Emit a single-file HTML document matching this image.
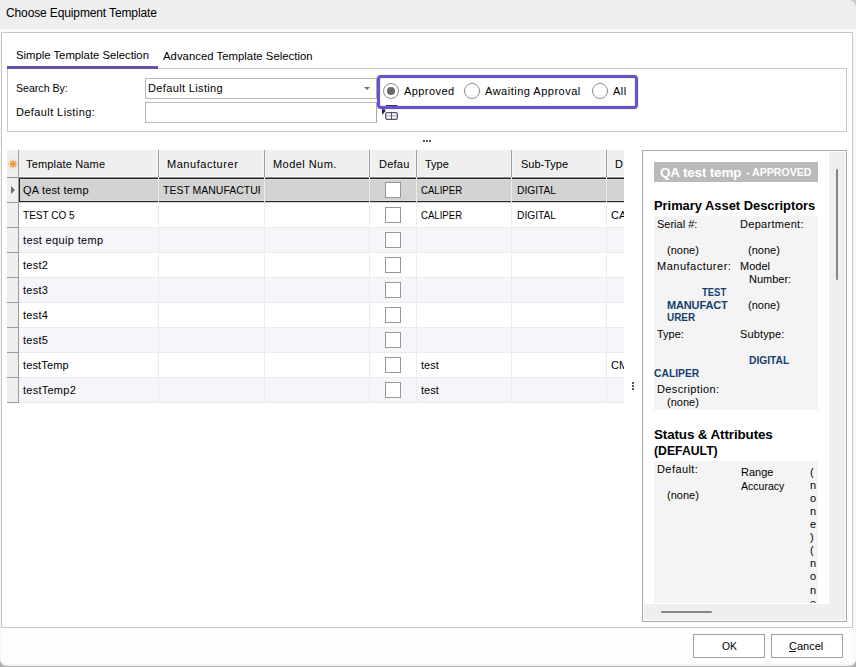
<!DOCTYPE html><html><head><meta charset="utf-8"><style>
*{margin:0;padding:0;box-sizing:border-box}
html,body{width:856px;height:667px;overflow:hidden;background:#fdfdfd;font-family:"Liberation Sans",sans-serif;color:#000}
.t{position:absolute;white-space:nowrap;line-height:1}
.r{position:absolute}
</style></head><body>
<div class="r" style="left:846px;top:0px;width:10px;height:10px;background:#c9cacc"></div>
<div class="r" style="left:0px;top:0px;width:856px;height:29px;background:#efefef;border-top-right-radius:8px"></div>
<div class="r" style="left:0px;top:29px;width:856px;height:3px;background:#f9fafb"></div>
<div class="t" style="left:6px;top:6.84px;font-size:12px;letter-spacing:-0.125px;">Choose Equipment Template</div><div class="r" style="left:0px;top:655px;width:856px;height:12px;background:#b0b0b0"></div>
<div class="r" style="left:0px;top:620px;width:856px;height:46px;background:#fdfdfd;border-bottom:2px solid #f3f4f6;border-radius:0 0 7px 7px"></div>
<div class="r" style="left:0px;top:29px;width:1px;height:630px;background:#f5f7fa"></div>
<div class="r" style="left:853px;top:29px;width:3px;height:630px;background:#f8f9fb"></div>
<div class="r" style="left:1px;top:32px;width:852px;height:596px;background:#fff;border:1px solid #c6c6c6"></div>
<div class="t" style="left:16px;top:50.43px;font-size:11.3px;">Simple Template Selection</div><div class="t" style="left:163px;top:51.43px;font-size:11.3px;letter-spacing:0.038px;">Advanced Template Selection</div><div class="r" style="left:7px;top:68px;width:840px;height:64px;border:1px solid #c8c8c8"></div>
<div class="r" style="left:7px;top:66px;width:151px;height:3px;background:#6650a8"></div>
<div class="t" style="left:16.0px;top:82.69px;font-size:11px;transform:scaleX(0.9623);transform-origin:0 0;">Search By:</div><div class="t" style="left:16px;top:106.69px;font-size:11px;letter-spacing:0.4px;">Default Listing:</div><div class="r" style="left:145px;top:78px;width:232px;height:21px;background:#fff;border:1px solid #bababa"></div>
<div class="t" style="left:148px;top:82.69px;font-size:11px;letter-spacing:0.357px;">Default Listing</div><svg class="r" style="left:364px;top:87px" width="7" height="4"><path d="M0 0h6L3 3z" fill="#6d6d6d"/></svg>
<div class="r" style="left:145px;top:102px;width:232px;height:21px;background:#fff;border:1px solid #bababa"></div>
<div class="r" style="left:377px;top:75px;width:261px;height:34px;background:#fff;border:3px solid #6652cc;border-radius:4px;box-shadow:0 0 1px 1px #eeeee6, inset 0 0 1px 1px #efefe8"></div>
<div class="r" style="left:376px;top:78px;width:1px;height:21px;background:#a8a8a8"></div>
<div class="r" style="left:376px;top:102px;width:1px;height:21px;background:#a8a8a8"></div>
<svg class="r" style="left:380px;top:103px" width="20" height="18" viewBox="380 103 20 18"><path d="M386.5 105.5h10.5" stroke="#3a3458" stroke-width="1.2" stroke-linecap="round"/><path d="M382 109 L385.4 109.6 L385.2 111.2 L382.9 114.2 L382 114.2 Z" fill="#2e2848"/><rect x="385.7" y="112.7" width="11.6" height="6.6" rx="1.6" fill="#fff" stroke="#554f72" stroke-width="1.3"/><path d="M386.3 115.8h10.4" stroke="#9a96ac" stroke-width="1"/><path d="M391.5 112.5v7" stroke="#554f72" stroke-width="1.1"/></svg>
<svg class="r" style="left:383px;top:83px" width="16" height="16"><circle cx="8" cy="8" r="7.5" fill="#fff" stroke="#8e8e8e" stroke-width="1"/><circle cx="8" cy="8" r="4" fill="#6a6a6a"/></svg>
<div class="t" style="left:404px;top:85.69px;font-size:11px;letter-spacing:0.429px;">Approved</div><svg class="r" style="left:464px;top:83px" width="16" height="16"><circle cx="8" cy="8" r="7.5" fill="#fff" stroke="#8e8e8e" stroke-width="1"/></svg>
<div class="t" style="left:485px;top:85.69px;font-size:11px;letter-spacing:0.5px;">Awaiting Approval</div><svg class="r" style="left:592px;top:83px" width="16" height="16"><circle cx="8" cy="8" r="7.5" fill="#fff" stroke="#8e8e8e" stroke-width="1"/></svg>
<div class="t" style="left:613px;top:85.69px;font-size:11px;letter-spacing:0.5px;">All</div><div class="r" style="left:423px;top:140px;width:2px;height:2px;background:#5a5a5a"></div>
<div class="r" style="left:426px;top:140px;width:2px;height:2px;background:#5a5a5a"></div>
<div class="r" style="left:429px;top:140px;width:2px;height:2px;background:#5a5a5a"></div>
<div class="r" style="left:632px;top:382px;width:2px;height:2px;background:#5a5a5a"></div>
<div class="r" style="left:632px;top:385px;width:2px;height:2px;background:#5a5a5a"></div>
<div class="r" style="left:632px;top:388px;width:2px;height:2px;background:#5a5a5a"></div>
<div class="r" style="left:7px;top:150px;width:617px;height:28px;background:#efefef"></div>
<div class="r" style="left:158px;top:150px;width:1px;height:27px;background:#9d9d9d"></div>
<div class="r" style="left:157px;top:151px;width:1px;height:26px;background:#f6f6f6"></div>
<div class="r" style="left:159px;top:151px;width:1px;height:26px;background:#f6f6f6"></div>
<div class="r" style="left:264px;top:150px;width:1px;height:27px;background:#9d9d9d"></div>
<div class="r" style="left:263px;top:151px;width:1px;height:26px;background:#f6f6f6"></div>
<div class="r" style="left:265px;top:151px;width:1px;height:26px;background:#f6f6f6"></div>
<div class="r" style="left:369px;top:150px;width:1px;height:27px;background:#9d9d9d"></div>
<div class="r" style="left:368px;top:151px;width:1px;height:26px;background:#f6f6f6"></div>
<div class="r" style="left:370px;top:151px;width:1px;height:26px;background:#f6f6f6"></div>
<div class="r" style="left:416px;top:150px;width:1px;height:27px;background:#9d9d9d"></div>
<div class="r" style="left:415px;top:151px;width:1px;height:26px;background:#f6f6f6"></div>
<div class="r" style="left:417px;top:151px;width:1px;height:26px;background:#f6f6f6"></div>
<div class="r" style="left:511px;top:150px;width:1px;height:27px;background:#9d9d9d"></div>
<div class="r" style="left:510px;top:151px;width:1px;height:26px;background:#f6f6f6"></div>
<div class="r" style="left:512px;top:151px;width:1px;height:26px;background:#f6f6f6"></div>
<div class="r" style="left:606px;top:150px;width:1px;height:27px;background:#9d9d9d"></div>
<div class="r" style="left:605px;top:151px;width:1px;height:26px;background:#f6f6f6"></div>
<div class="r" style="left:607px;top:151px;width:1px;height:26px;background:#f6f6f6"></div>
<div class="r" style="left:18px;top:150px;width:1px;height:28px;background:#9d9d9d"></div>
<div class="r" style="left:19px;top:177px;width:139px;height:1px;background:#8a8a8a"></div>
<div class="r" style="left:19px;top:176px;width:139px;height:1px;background:#f8f8f8"></div>
<div class="r" style="left:159px;top:177px;width:105px;height:1px;background:#8a8a8a"></div>
<div class="r" style="left:159px;top:176px;width:105px;height:1px;background:#f8f8f8"></div>
<div class="r" style="left:265px;top:177px;width:104px;height:1px;background:#8a8a8a"></div>
<div class="r" style="left:265px;top:176px;width:104px;height:1px;background:#f8f8f8"></div>
<div class="r" style="left:370px;top:177px;width:46px;height:1px;background:#8a8a8a"></div>
<div class="r" style="left:370px;top:176px;width:46px;height:1px;background:#f8f8f8"></div>
<div class="r" style="left:417px;top:177px;width:94px;height:1px;background:#8a8a8a"></div>
<div class="r" style="left:417px;top:176px;width:94px;height:1px;background:#f8f8f8"></div>
<div class="r" style="left:512px;top:177px;width:94px;height:1px;background:#8a8a8a"></div>
<div class="r" style="left:512px;top:176px;width:94px;height:1px;background:#f8f8f8"></div>
<div class="r" style="left:607px;top:177px;width:17px;height:1px;background:#8a8a8a"></div>
<div class="r" style="left:607px;top:176px;width:17px;height:1px;background:#f8f8f8"></div>
<div class="r" style="left:7px;top:177px;width:11px;height:1px;background:#8a8a8a"></div>
<svg class="r" style="left:8px;top:159px" width="10" height="10"><g stroke="#f39a3a" stroke-width="1.2"><path d="M5 0.5v9M0.5 5h9M1.8 1.8l6.4 6.4M8.2 1.8l-6.4 6.4"/></g><circle cx="5" cy="5" r="2.6" fill="#f39a3a"/></svg>
<div class="t" style="left:26px;top:158.69px;font-size:11px;letter-spacing:0.167px;">Template Name</div><div class="t" style="left:167px;top:158.69px;font-size:11px;letter-spacing:0.545px;">Manufacturer</div><div class="t" style="left:273px;top:158.69px;font-size:11px;letter-spacing:0.444px;">Model Num.</div><div class="t" style="left:379px;top:158.69px;font-size:11px;letter-spacing:0.25px;">Defau</div><div class="t" style="left:425px;top:158.69px;font-size:11px;">Type</div><div class="t" style="left:521px;top:158.69px;font-size:11px;">Sub-Type</div><div class="t" style="left:615px;top:158.69px;font-size:11px;">D</div><div class="r" style="left:19px;top:178px;width:605px;height:25px;background:#d3d3d3"></div>
<div class="r" style="left:158px;top:178px;width:1px;height:25px;background:#e0e0e0"></div>
<div class="r" style="left:264px;top:178px;width:1px;height:25px;background:#e0e0e0"></div>
<div class="r" style="left:369px;top:178px;width:1px;height:25px;background:#e0e0e0"></div>
<div class="r" style="left:416px;top:178px;width:1px;height:25px;background:#e0e0e0"></div>
<div class="r" style="left:511px;top:178px;width:1px;height:25px;background:#e0e0e0"></div>
<div class="r" style="left:606px;top:178px;width:1px;height:25px;background:#e0e0e0"></div>
<div class="r" style="left:7px;top:178px;width:11px;height:24px;background:#efefef"></div>
<div class="r" style="left:7px;top:202px;width:12px;height:1px;background:#9a9a9a"></div>
<div class="r" style="left:18px;top:178px;width:1px;height:25px;background:#9a9a9a"></div>
<div class="t" style="left:23px;top:184.69px;font-size:11px;letter-spacing:0.182px;">QA test temp</div><div class="r" style="left:159px;top:178px;width:101px;height:24px;overflow:hidden"><div class="t" style="left:4.0px;top:6.69px;font-size:11px;transform:scaleX(0.9533);transform-origin:0 0;">TEST MANUFACTUR</div></div>
<div class="r" style="left:385px;top:182px;width:16px;height:16px;background:#fff;border:1px solid #979797"></div>
<div class="t" style="left:421.0px;top:184.69px;font-size:11px;transform:scaleX(0.8723);transform-origin:0 0;">CALIPER</div><div class="t" style="left:517.0px;top:184.69px;font-size:11px;transform:scaleX(0.9286);transform-origin:0 0;">DIGITAL</div><div class="r" style="left:19px;top:203px;width:605px;height:25px;background:#ffffff"></div>
<div class="r" style="left:19px;top:227px;width:605px;height:1px;background:#ececec"></div>
<div class="r" style="left:158px;top:203px;width:1px;height:25px;background:#ececec"></div>
<div class="r" style="left:264px;top:203px;width:1px;height:25px;background:#ececec"></div>
<div class="r" style="left:369px;top:203px;width:1px;height:25px;background:#ececec"></div>
<div class="r" style="left:416px;top:203px;width:1px;height:25px;background:#ececec"></div>
<div class="r" style="left:511px;top:203px;width:1px;height:25px;background:#ececec"></div>
<div class="r" style="left:606px;top:203px;width:1px;height:25px;background:#ececec"></div>
<div class="r" style="left:7px;top:203px;width:11px;height:24px;background:#efefef"></div>
<div class="r" style="left:7px;top:227px;width:12px;height:1px;background:#9a9a9a"></div>
<div class="r" style="left:18px;top:203px;width:1px;height:25px;background:#9a9a9a"></div>
<div class="t" style="left:23.0px;top:209.69px;font-size:11px;transform:scaleX(0.9123);transform-origin:0 0;">TEST CO 5</div><div class="r" style="left:385px;top:207px;width:16px;height:16px;background:#fff;border:1px solid #979797"></div>
<div class="t" style="left:421.0px;top:209.69px;font-size:11px;transform:scaleX(0.8723);transform-origin:0 0;">CALIPER</div><div class="t" style="left:517.0px;top:209.69px;font-size:11px;transform:scaleX(0.9286);transform-origin:0 0;">DIGITAL</div><div class="r" style="left:607px;top:203px;width:17px;height:24px;overflow:hidden"><div class="t" style="left:4px;top:6.69px;font-size:11px;">CA</div></div>
<div class="r" style="left:19px;top:228px;width:605px;height:25px;background:#f5f5fa"></div>
<div class="r" style="left:19px;top:252px;width:605px;height:1px;background:#ececec"></div>
<div class="r" style="left:158px;top:228px;width:1px;height:25px;background:#ececec"></div>
<div class="r" style="left:264px;top:228px;width:1px;height:25px;background:#ececec"></div>
<div class="r" style="left:369px;top:228px;width:1px;height:25px;background:#ececec"></div>
<div class="r" style="left:416px;top:228px;width:1px;height:25px;background:#ececec"></div>
<div class="r" style="left:511px;top:228px;width:1px;height:25px;background:#ececec"></div>
<div class="r" style="left:606px;top:228px;width:1px;height:25px;background:#ececec"></div>
<div class="r" style="left:7px;top:228px;width:11px;height:24px;background:#efefef"></div>
<div class="r" style="left:7px;top:252px;width:12px;height:1px;background:#9a9a9a"></div>
<div class="r" style="left:18px;top:228px;width:1px;height:25px;background:#9a9a9a"></div>
<div class="t" style="left:23px;top:234.69px;font-size:11px;letter-spacing:0.357px;">test equip temp</div><div class="r" style="left:385px;top:232px;width:16px;height:16px;background:#fff;border:1px solid #979797"></div>
<div class="r" style="left:19px;top:253px;width:605px;height:25px;background:#ffffff"></div>
<div class="r" style="left:19px;top:277px;width:605px;height:1px;background:#ececec"></div>
<div class="r" style="left:158px;top:253px;width:1px;height:25px;background:#ececec"></div>
<div class="r" style="left:264px;top:253px;width:1px;height:25px;background:#ececec"></div>
<div class="r" style="left:369px;top:253px;width:1px;height:25px;background:#ececec"></div>
<div class="r" style="left:416px;top:253px;width:1px;height:25px;background:#ececec"></div>
<div class="r" style="left:511px;top:253px;width:1px;height:25px;background:#ececec"></div>
<div class="r" style="left:606px;top:253px;width:1px;height:25px;background:#ececec"></div>
<div class="r" style="left:7px;top:253px;width:11px;height:24px;background:#efefef"></div>
<div class="r" style="left:7px;top:277px;width:12px;height:1px;background:#9a9a9a"></div>
<div class="r" style="left:18px;top:253px;width:1px;height:25px;background:#9a9a9a"></div>
<div class="t" style="left:23px;top:259.69px;font-size:11px;letter-spacing:0.25px;">test2</div><div class="r" style="left:385px;top:257px;width:16px;height:16px;background:#fff;border:1px solid #979797"></div>
<div class="r" style="left:19px;top:278px;width:605px;height:25px;background:#f5f5fa"></div>
<div class="r" style="left:19px;top:302px;width:605px;height:1px;background:#ececec"></div>
<div class="r" style="left:158px;top:278px;width:1px;height:25px;background:#ececec"></div>
<div class="r" style="left:264px;top:278px;width:1px;height:25px;background:#ececec"></div>
<div class="r" style="left:369px;top:278px;width:1px;height:25px;background:#ececec"></div>
<div class="r" style="left:416px;top:278px;width:1px;height:25px;background:#ececec"></div>
<div class="r" style="left:511px;top:278px;width:1px;height:25px;background:#ececec"></div>
<div class="r" style="left:606px;top:278px;width:1px;height:25px;background:#ececec"></div>
<div class="r" style="left:7px;top:278px;width:11px;height:24px;background:#efefef"></div>
<div class="r" style="left:7px;top:302px;width:12px;height:1px;background:#9a9a9a"></div>
<div class="r" style="left:18px;top:278px;width:1px;height:25px;background:#9a9a9a"></div>
<div class="t" style="left:23px;top:284.69px;font-size:11px;letter-spacing:0.25px;">test3</div><div class="r" style="left:385px;top:282px;width:16px;height:16px;background:#fff;border:1px solid #979797"></div>
<div class="r" style="left:19px;top:303px;width:605px;height:25px;background:#ffffff"></div>
<div class="r" style="left:19px;top:327px;width:605px;height:1px;background:#ececec"></div>
<div class="r" style="left:158px;top:303px;width:1px;height:25px;background:#ececec"></div>
<div class="r" style="left:264px;top:303px;width:1px;height:25px;background:#ececec"></div>
<div class="r" style="left:369px;top:303px;width:1px;height:25px;background:#ececec"></div>
<div class="r" style="left:416px;top:303px;width:1px;height:25px;background:#ececec"></div>
<div class="r" style="left:511px;top:303px;width:1px;height:25px;background:#ececec"></div>
<div class="r" style="left:606px;top:303px;width:1px;height:25px;background:#ececec"></div>
<div class="r" style="left:7px;top:303px;width:11px;height:24px;background:#efefef"></div>
<div class="r" style="left:7px;top:327px;width:12px;height:1px;background:#9a9a9a"></div>
<div class="r" style="left:18px;top:303px;width:1px;height:25px;background:#9a9a9a"></div>
<div class="t" style="left:23px;top:309.69px;font-size:11px;letter-spacing:0.25px;">test4</div><div class="r" style="left:385px;top:307px;width:16px;height:16px;background:#fff;border:1px solid #979797"></div>
<div class="r" style="left:19px;top:328px;width:605px;height:25px;background:#f5f5fa"></div>
<div class="r" style="left:19px;top:352px;width:605px;height:1px;background:#ececec"></div>
<div class="r" style="left:158px;top:328px;width:1px;height:25px;background:#ececec"></div>
<div class="r" style="left:264px;top:328px;width:1px;height:25px;background:#ececec"></div>
<div class="r" style="left:369px;top:328px;width:1px;height:25px;background:#ececec"></div>
<div class="r" style="left:416px;top:328px;width:1px;height:25px;background:#ececec"></div>
<div class="r" style="left:511px;top:328px;width:1px;height:25px;background:#ececec"></div>
<div class="r" style="left:606px;top:328px;width:1px;height:25px;background:#ececec"></div>
<div class="r" style="left:7px;top:328px;width:11px;height:24px;background:#efefef"></div>
<div class="r" style="left:7px;top:352px;width:12px;height:1px;background:#9a9a9a"></div>
<div class="r" style="left:18px;top:328px;width:1px;height:25px;background:#9a9a9a"></div>
<div class="t" style="left:23px;top:334.69px;font-size:11px;letter-spacing:0.25px;">test5</div><div class="r" style="left:385px;top:332px;width:16px;height:16px;background:#fff;border:1px solid #979797"></div>
<div class="r" style="left:19px;top:353px;width:605px;height:25px;background:#ffffff"></div>
<div class="r" style="left:19px;top:377px;width:605px;height:1px;background:#ececec"></div>
<div class="r" style="left:158px;top:353px;width:1px;height:25px;background:#ececec"></div>
<div class="r" style="left:264px;top:353px;width:1px;height:25px;background:#ececec"></div>
<div class="r" style="left:369px;top:353px;width:1px;height:25px;background:#ececec"></div>
<div class="r" style="left:416px;top:353px;width:1px;height:25px;background:#ececec"></div>
<div class="r" style="left:511px;top:353px;width:1px;height:25px;background:#ececec"></div>
<div class="r" style="left:606px;top:353px;width:1px;height:25px;background:#ececec"></div>
<div class="r" style="left:7px;top:353px;width:11px;height:24px;background:#efefef"></div>
<div class="r" style="left:7px;top:377px;width:12px;height:1px;background:#9a9a9a"></div>
<div class="r" style="left:18px;top:353px;width:1px;height:25px;background:#9a9a9a"></div>
<div class="t" style="left:23px;top:359.69px;font-size:11px;letter-spacing:0.143px;">testTemp</div><div class="r" style="left:385px;top:357px;width:16px;height:16px;background:#fff;border:1px solid #979797"></div>
<div class="t" style="left:421px;top:359.69px;font-size:11px;">test</div><div class="r" style="left:607px;top:353px;width:17px;height:24px;overflow:hidden"><div class="t" style="left:4px;top:6.69px;font-size:11px;">CM</div></div>
<div class="r" style="left:19px;top:378px;width:605px;height:25px;background:#f5f5fa"></div>
<div class="r" style="left:19px;top:402px;width:605px;height:1px;background:#ececec"></div>
<div class="r" style="left:158px;top:378px;width:1px;height:25px;background:#ececec"></div>
<div class="r" style="left:264px;top:378px;width:1px;height:25px;background:#ececec"></div>
<div class="r" style="left:369px;top:378px;width:1px;height:25px;background:#ececec"></div>
<div class="r" style="left:416px;top:378px;width:1px;height:25px;background:#ececec"></div>
<div class="r" style="left:511px;top:378px;width:1px;height:25px;background:#ececec"></div>
<div class="r" style="left:606px;top:378px;width:1px;height:25px;background:#ececec"></div>
<div class="r" style="left:7px;top:378px;width:11px;height:24px;background:#efefef"></div>
<div class="r" style="left:7px;top:402px;width:12px;height:1px;background:#9a9a9a"></div>
<div class="r" style="left:18px;top:378px;width:1px;height:25px;background:#9a9a9a"></div>
<div class="t" style="left:23px;top:384.69px;font-size:11px;letter-spacing:0.25px;">testTemp2</div><div class="r" style="left:385px;top:382px;width:16px;height:16px;background:#fff;border:1px solid #979797"></div>
<div class="t" style="left:421px;top:384.69px;font-size:11px;">test</div><div class="r" style="left:19px;top:178px;width:139px;height:1px;background:#262626"></div>
<div class="r" style="left:19px;top:179px;width:139px;height:1px;background:#dcdcdc"></div>
<div class="r" style="left:19px;top:200px;width:139px;height:1px;background:#dcdcdc"></div>
<div class="r" style="left:19px;top:201px;width:139px;height:1px;background:#262626"></div>
<div class="r" style="left:159px;top:178px;width:105px;height:1px;background:#262626"></div>
<div class="r" style="left:159px;top:179px;width:105px;height:1px;background:#dcdcdc"></div>
<div class="r" style="left:159px;top:200px;width:105px;height:1px;background:#dcdcdc"></div>
<div class="r" style="left:159px;top:201px;width:105px;height:1px;background:#262626"></div>
<div class="r" style="left:265px;top:178px;width:104px;height:1px;background:#262626"></div>
<div class="r" style="left:265px;top:179px;width:104px;height:1px;background:#dcdcdc"></div>
<div class="r" style="left:265px;top:200px;width:104px;height:1px;background:#dcdcdc"></div>
<div class="r" style="left:265px;top:201px;width:104px;height:1px;background:#262626"></div>
<div class="r" style="left:370px;top:178px;width:46px;height:1px;background:#262626"></div>
<div class="r" style="left:370px;top:179px;width:46px;height:1px;background:#dcdcdc"></div>
<div class="r" style="left:370px;top:200px;width:46px;height:1px;background:#dcdcdc"></div>
<div class="r" style="left:370px;top:201px;width:46px;height:1px;background:#262626"></div>
<div class="r" style="left:417px;top:178px;width:94px;height:1px;background:#262626"></div>
<div class="r" style="left:417px;top:179px;width:94px;height:1px;background:#dcdcdc"></div>
<div class="r" style="left:417px;top:200px;width:94px;height:1px;background:#dcdcdc"></div>
<div class="r" style="left:417px;top:201px;width:94px;height:1px;background:#262626"></div>
<div class="r" style="left:512px;top:178px;width:94px;height:1px;background:#262626"></div>
<div class="r" style="left:512px;top:179px;width:94px;height:1px;background:#dcdcdc"></div>
<div class="r" style="left:512px;top:200px;width:94px;height:1px;background:#dcdcdc"></div>
<div class="r" style="left:512px;top:201px;width:94px;height:1px;background:#262626"></div>
<div class="r" style="left:607px;top:178px;width:17px;height:1px;background:#262626"></div>
<div class="r" style="left:607px;top:179px;width:17px;height:1px;background:#dcdcdc"></div>
<div class="r" style="left:607px;top:200px;width:17px;height:1px;background:#dcdcdc"></div>
<div class="r" style="left:607px;top:201px;width:17px;height:1px;background:#262626"></div>
<div class="r" style="left:158px;top:177px;width:1px;height:25px;background:#ececec"></div>
<div class="r" style="left:264px;top:177px;width:1px;height:25px;background:#ececec"></div>
<div class="r" style="left:369px;top:177px;width:1px;height:25px;background:#ececec"></div>
<div class="r" style="left:416px;top:177px;width:1px;height:25px;background:#ececec"></div>
<div class="r" style="left:511px;top:177px;width:1px;height:25px;background:#ececec"></div>
<div class="r" style="left:606px;top:177px;width:1px;height:25px;background:#ececec"></div>
<div class="r" style="left:19px;top:178px;width:1px;height:24px;background:#262626"></div>
<svg class="r" style="left:11px;top:186px" width="5" height="8"><path d="M0 0L4 4L0 8z" fill="#6d6d6d"/></svg>
<div class="r" style="left:642px;top:150px;width:205px;height:472px;background:#fff;border:1px solid #a8a8b0"></div>
<div class="r" style="left:829px;top:152px;width:16px;height:452px;background:#efefef"></div>
<div class="r" style="left:836px;top:169px;width:2px;height:111px;background:#858585;border-radius:1px"></div>
<div class="r" style="left:644px;top:604px;width:201px;height:16px;background:#efefef"></div>
<div class="r" style="left:661px;top:611px;width:51px;height:2px;background:#858585;border-radius:1px"></div>
<div class="r" style="left:654px;top:162px;width:164px;height:20px;background:#bababa"></div>
<div class="t" style="left:660px;top:165.57px;font-size:13.5px;font-weight:700;color:#fff;letter-spacing:-0.182px;">QA test temp</div><div class="t" style="left:746.0px;top:167.35px;font-size:11.4px;transform:scaleX(0.9286);transform-origin:0 0;font-weight:700;color:#fff;">- APPROVED</div><div class="t" style="left:654.0px;top:199.49px;font-size:13.6px;transform:scaleX(0.9471);transform-origin:0 0;font-weight:700;">Primary Asset Descriptors</div><div class="r" style="left:654px;top:216px;width:164px;height:194px;background:#f4f4f4"></div>
<div class="t" style="left:657px;top:218.69px;font-size:11px;">Serial #:</div><div class="t" style="left:740px;top:218.69px;font-size:11px;letter-spacing:0.3px;">Department:</div><div class="t" style="left:667px;top:244.69px;font-size:11px;">(none)</div><div class="t" style="left:748px;top:244.69px;font-size:11px;">(none)</div><div class="t" style="left:657px;top:260.69px;font-size:11px;letter-spacing:0.5px;">Manufacturer:</div><div class="t" style="left:740px;top:260.69px;font-size:11px;">Model</div><div class="t" style="left:749px;top:273.69px;font-size:11px;">Number:</div><div class="t" style="left:702.0px;top:286.69px;font-size:11px;transform:scaleX(0.8621);transform-origin:0 0;font-weight:700;color:#163f70;">TEST</div><div class="t" style="left:667px;top:299.69px;font-size:11px;font-weight:700;color:#163f70;letter-spacing:-0.143px;">MANUFACT</div><div class="t" style="left:748px;top:299.69px;font-size:11px;">(none)</div><div class="t" style="left:667.0px;top:311.69px;font-size:11px;transform:scaleX(0.9032);transform-origin:0 0;font-weight:700;color:#163f70;">URER</div><div class="t" style="left:657px;top:328.69px;font-size:11px;">Type:</div><div class="t" style="left:740px;top:328.69px;font-size:11px;letter-spacing:0.143px;">Subtype:</div><div class="t" style="left:749.0px;top:354.69px;font-size:11px;transform:scaleX(0.9302);transform-origin:0 0;font-weight:700;color:#163f70;">DIGITAL</div><div class="t" style="left:654.0px;top:367.69px;font-size:11px;transform:scaleX(0.9375);transform-origin:0 0;font-weight:700;color:#163f70;">CALIPER</div><div class="t" style="left:657px;top:383.69px;font-size:11px;letter-spacing:0.364px;">Description:</div><div class="t" style="left:667px;top:396.69px;font-size:11px;">(none)</div><div class="t" style="left:654px;top:427.66px;font-size:13.4px;font-weight:700;letter-spacing:-0.111px;">Status &amp; Attributes</div><div class="t" style="left:654.0px;top:443.66px;font-size:13.4px;transform:scaleX(0.9143);transform-origin:0 0;font-weight:700;">(DEFAULT)</div><div class="r" style="left:654px;top:461px;width:164px;height:142px;background:#f4f4f4;overflow:hidden"><div class="t" style="left:3px;top:2.69px;font-size:11px;letter-spacing:0.429px;">Default:</div><div class="t" style="left:13px;top:28.69px;font-size:11px;">(none)</div><div class="t" style="left:87px;top:5.69px;font-size:11px;">Range</div><div class="t" style="left:87.0px;top:19.69px;font-size:11px;transform:scaleX(0.9565);transform-origin:0 0;">Accuracy</div><div class="t" style="left:156px;top:5.69px;font-size:11px;">(</div><div class="t" style="left:156px;top:18.79px;font-size:11px;">n</div><div class="t" style="left:156px;top:31.89px;font-size:11px;">o</div><div class="t" style="left:156px;top:44.99px;font-size:11px;">n</div><div class="t" style="left:156px;top:58.09px;font-size:11px;">e</div><div class="t" style="left:156px;top:71.19px;font-size:11px;">)</div><div class="t" style="left:156px;top:84.29px;font-size:11px;">(</div><div class="t" style="left:156px;top:97.39px;font-size:11px;">n</div><div class="t" style="left:156px;top:110.49px;font-size:11px;">o</div><div class="t" style="left:156px;top:123.59px;font-size:11px;">n</div><div class="t" style="left:156px;top:136.69px;font-size:11px;">e</div><div class="t" style="left:156px;top:149.79px;font-size:11px;">)</div></div>
<div class="r" style="left:693px;top:634px;width:72px;height:24px;background:#fff;border:1px solid #a3a3a3"></div>
<div class="t" style="left:722.0px;top:640.69px;font-size:11px;transform:scaleX(0.9375);transform-origin:0 0;">OK</div><div class="r" style="left:771px;top:634px;width:72px;height:24px;background:#fff;border:1px solid #a3a3a3"></div>
<div class="t" style="left:789px;top:640.69px;font-size:11px;">Cancel</div><div class="r" style="left:789px;top:651px;width:7px;height:1px;background:#1a1a1a"></div>
</body></html>
